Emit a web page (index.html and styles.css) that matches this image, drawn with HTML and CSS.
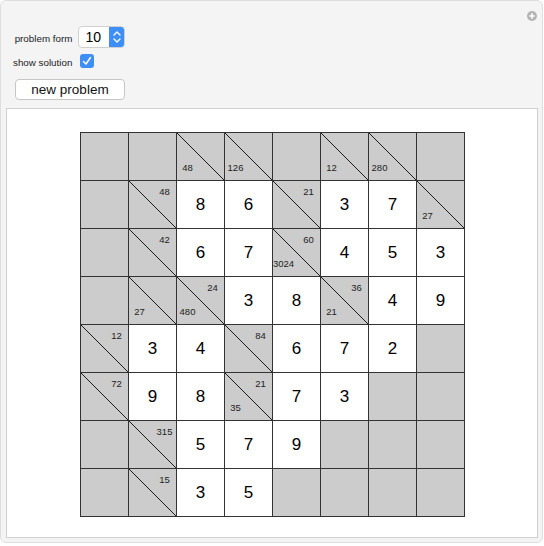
FILE: index.html
```html
<!DOCTYPE html>
<html>
<head>
<meta charset="utf-8">
<link rel="stylesheet" href="styles.css">
</head>
<body>
<div class="panel">
  <span class="plus"><svg width="10" height="10" viewBox="0 0 10 10"><circle cx="5" cy="5" r="5" fill="#b4b4b4"/><path d="M5 2.3V7.7M2.3 5H7.7" stroke="#fff" stroke-width="1.6"/></svg></span>
  <div class="controls">
    <div class="form">
      <span class="label">problem form</span>
      <div class="select"><span class="val">10</span><span class="arrows"><svg width="16" height="22" viewBox="0 0 16 22"><path d="M5 9 L8 6 L11 9 M5 13 L8 16 L11 13" fill="none" stroke="#fff" stroke-width="1.4" stroke-linecap="round" stroke-linejoin="round"/></svg></span></div>
      <span class="label">show solution</span>
      <div class="check"><svg width="14" height="14" viewBox="0 0 14 14"><path d="M3.5 7.5 L6 10 L10.5 3.5" fill="none" stroke="#fff" stroke-width="1.5" stroke-linecap="round" stroke-linejoin="round"/></svg></div>
    </div>
    <button class="btn">new problem</button>
  </div>
  <div class="view">
    <div class="grid">
      <!-- row 0 -->
      <div class="c b"></div><div class="c b"></div>
      <div class="c d"><span class="dn">48</span></div>
      <div class="c d"><span class="dn">126</span></div>
      <div class="c b"></div>
      <div class="c d"><span class="dn">12</span></div>
      <div class="c d"><span class="dn">280</span></div>
      <div class="c b"></div>
      <!-- row 1 -->
      <div class="c b"></div>
      <div class="c d"><span class="ac">48</span></div>
      <div class="c w">8</div><div class="c w">6</div>
      <div class="c d"><span class="ac">21</span></div>
      <div class="c w">3</div><div class="c w">7</div>
      <div class="c d"><span class="dn">27</span></div>
      <!-- row 2 -->
      <div class="c b"></div>
      <div class="c d"><span class="ac">42</span></div>
      <div class="c w">6</div><div class="c w">7</div>
      <div class="c d"><span class="ac">60</span><span class="dn">3024</span></div>
      <div class="c w">4</div><div class="c w">5</div><div class="c w">3</div>
      <!-- row 3 -->
      <div class="c b"></div>
      <div class="c d"><span class="dn">27</span></div>
      <div class="c d"><span class="ac">24</span><span class="dn">480</span></div>
      <div class="c w">3</div><div class="c w">8</div>
      <div class="c d"><span class="ac">36</span><span class="dn">21</span></div>
      <div class="c w">4</div><div class="c w">9</div>
      <!-- row 4 -->
      <div class="c d"><span class="ac">12</span></div>
      <div class="c w">3</div><div class="c w">4</div>
      <div class="c d"><span class="ac">84</span></div>
      <div class="c w">6</div><div class="c w">7</div><div class="c w">2</div>
      <div class="c b"></div>
      <!-- row 5 -->
      <div class="c d"><span class="ac">72</span></div>
      <div class="c w">9</div><div class="c w">8</div>
      <div class="c d"><span class="ac">21</span><span class="dn">35</span></div>
      <div class="c w">7</div><div class="c w">3</div>
      <div class="c b"></div><div class="c b"></div>
      <!-- row 6 -->
      <div class="c b"></div>
      <div class="c d"><span class="ac">315</span></div>
      <div class="c w">5</div><div class="c w">7</div><div class="c w">9</div>
      <div class="c b"></div><div class="c b"></div><div class="c b"></div>
      <!-- row 7 -->
      <div class="c b"></div>
      <div class="c d"><span class="ac">15</span></div>
      <div class="c w">3</div><div class="c w">5</div>
      <div class="c b"></div><div class="c b"></div><div class="c b"></div><div class="c b"></div>
    </div>
  </div>
</div>
</body>
</html>
```
FILE: styles.css
```css
html, body {
  margin: 0;
  padding: 0;
  background: #ffffff;
}
body {
  font-family: "Liberation Sans", Arial, sans-serif;
}
.panel {
  position: relative;
  width: 543px;
  height: 543px;
  box-sizing: border-box;
  border: 1px solid #dedede;
  border-radius: 6px;
  background: #f4f4f4;
}
.plus {
  position: absolute;
  top: 10px;
  right: 5px;
  width: 10px;
  height: 10px;
  line-height: 0;
}
.controls {
  padding: 25px 0 0 12px;
}
.form {
  display: grid;
  grid-template-columns: auto auto;
  width: max-content;
  column-gap: 6px;
  row-gap: 6px;
  align-items: center;
  justify-items: start;
}
.label {
  justify-self: end;
  white-space: nowrap;
  font-size: 9.8px;
  color: #222;
  margin-top: 2px;
}
.select {
  display: flex;
  width: 47px;
  height: 22px;
  box-sizing: border-box;
  border: 1px solid #d0d0d0;
  border-radius: 4px;
  background: #fff;
  overflow: hidden;
}
.val {
  flex: 1;
  font-size: 14px;
  line-height: 20px;
  padding-left: 6px;
  color: #000;
}
.arrows {
  width: 16px;
  margin: -1px -1px -1px 0;
  background: #3d8ef7;
  line-height: 0;
}
.check {
  width: 14px;
  height: 14px;
  margin-left: 2px;
  border-radius: 3px;
  background: #3d8ef7;
  line-height: 0;
}
.btn {
  display: block;
  margin: 11px 0 0 2px;
  width: 110px;
  height: 21px;
  padding: 0;
  box-sizing: border-box;
  border: 1px solid #c6c6c6;
  border-radius: 4px;
  background: #fff;
  font-family: "Liberation Sans", Arial, sans-serif;
  font-size: 13.5px;
  color: #111;
  line-height: 19px;
}
.view {
  margin: 8px 0 0 5px;
  width: 532px;
  height: 430px;
  box-sizing: border-box;
  border: 1px solid #cfcfcf;
  background: #fff;
  padding: 23px 0 0 73px;
}
.grid {
  display: grid;
  grid-template-columns: repeat(8, 47px);
  grid-auto-rows: 47px;
  gap: 1px;
  width: max-content;
  background: #333333;
  border: 1px solid #333333;
}
.c {
  background: #cccccc;
  box-sizing: border-box;
}
.w {
  background: #fff;
  display: flex;
  align-items: center;
  justify-content: center;
  font-size: 17px;
  color: #000;
}
.d {
  display: flex;
  flex-direction: column;
  justify-content: space-between;
  background: linear-gradient(to top right, #cccccc calc(50% - 0.6px), #1a1a1a calc(50% - 0.6px), #1a1a1a calc(50% + 0.6px), #cccccc calc(50% + 0.6px));
  font-size: 9.5px;
  line-height: 10px;
  color: #222;
}
.ac {
  align-self: flex-end;
  width: 23px;
  text-align: center;
  margin-top: 6px;
}
.dn {
  align-self: flex-start;
  width: 21px;
  text-align: center;
  margin-top: auto;
  margin-bottom: 7px;
}
```
